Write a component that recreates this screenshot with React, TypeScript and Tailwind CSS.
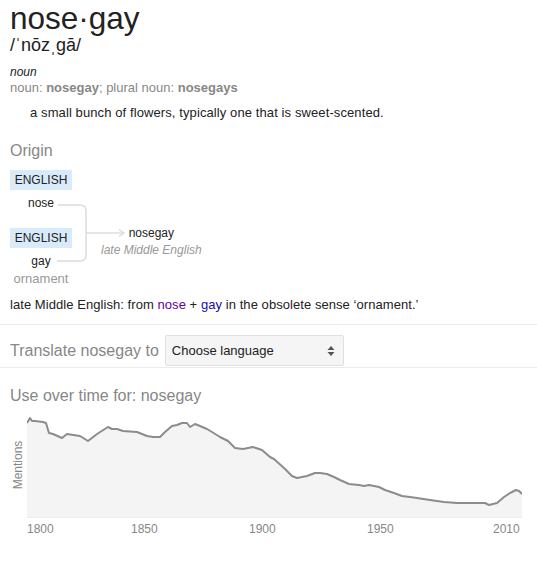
import React from "react";

const pts: [number, number][] = [
  [0, 11], [3, 6], [5, 9], [8, 9], [16, 10], [19, 11], [22, 21], [26, 22], [35, 26], [40, 22], [53, 24], [61, 29], [70, 22], [81, 15], [85, 17], [90, 17], [96, 19], [110, 20], [120, 24], [126, 25], [133, 25], [138, 20], [145, 14], [150, 13], [155, 11], [160, 11], [163, 15], [168, 12], [173, 14], [180, 17], [185, 20], [193, 25], [201, 29], [208, 36], [216, 37], [226, 35], [235, 38], [243, 45], [247, 47], [257, 56], [265, 64], [270, 66], [280, 64], [288, 61], [293, 61], [300, 62], [307, 65], [313, 68], [322, 72], [332, 73], [337, 74], [342, 73], [352, 75], [358, 78], [367, 81], [375, 84], [383, 85], [390, 86], [403, 88], [417, 90], [430, 91], [443, 91], [458, 91], [462, 93], [470, 91], [477, 85], [483, 81], [489, 78], [492, 79], [495, 82],
];

const line = pts.map((p, i) => `${i === 0 ? "M" : "L"}${p[0]} ${p[1]}`).join(" ");
const area = `${line} L495 106 L0 106 Z`;

const labels: [string, number][] = [
  ["1800", 27],
  ["1850", 131],
  ["1900", 249],
  ["1950", 367],
  ["2010", 493],
];

function Badge() {
  return (
    <div className="h-[20px] w-[62px] bg-[#d9ebfb] text-[12px] leading-[20px] text-[#222] flex items-center justify-center">
      ENGLISH
    </div>
  );
}

export default function App() {
  return (
    <div
      className="w-[537px] h-[561px] bg-white overflow-hidden"
      style={{ fontFamily: '"Liberation Sans", Arial, sans-serif' }}
    >
      <div className="px-[10px]">
        <h1 className="text-[31.5px] leading-[36px] text-[#222]">nose·gay</h1>
        <div className="text-[18px] leading-[18px] text-[#222]">/ˈnōzˌgā/</div>
        <div className="mt-[11px] text-[12px] leading-[15px] italic text-[#222]">noun</div>
        <div className="text-[13px] leading-[16px] text-[#878787]">
          noun: <b>nosegay</b>; plural noun: <b>nosegays</b>
        </div>
        <div className="mt-[9px] pl-[20px] text-[13px] leading-[16px] tracking-[0.1px] text-[#222]">
          a small bunch of flowers, typically one that is sweet-scented.
        </div>
        <div className="mt-[20px] text-[16px] leading-[20px] text-[#878787]">Origin</div>

        <div className="relative mt-[9px] flex">
          <svg
            className="absolute left-[-10px] top-0"
            width="140"
            height="120"
            viewBox="0 0 140 120"
            fill="none"
          >
            <path
              d="M58 35 H80 Q86 35 86 41 V85 Q86 91 80 91 H57"
              stroke="#dcdcdc"
              strokeWidth="1.5"
            />
            <path d="M86 63 H124" stroke="#dcdcdc" strokeWidth="1.5" />
            <path d="M119 59.5 L124 63 L119 66.5" stroke="#dcdcdc" strokeWidth="1.5" />
          </svg>
          <div className="flex flex-col items-center w-[62px]">
            <Badge />
            <div className="mt-[6px] text-[12px] leading-[14px] text-[#222]">nose</div>
            <div className="mt-[18px]">
              <Badge />
            </div>
            <div className="mt-[6px] text-[12px] leading-[14px] text-[#222]">gay</div>
            <div className="mt-[3px] text-[13px] leading-[15px] text-[#999]">ornament</div>
          </div>
          <div className="ml-[29px] mt-[56px] flex flex-col items-center">
            <div className="text-[12px] leading-[14px] text-[#222]">nosegay</div>
            <div className="mt-[3px] text-[12px] leading-[14px] italic text-[#999]">
              late Middle English
            </div>
          </div>
        </div>

        <div className="mt-[11px] text-[13px] leading-[16px] tracking-[0.06px] text-[#222]">
          late Middle English: from <span className="text-[#660099]">nose</span> +{" "}
          <span className="text-[#1a0dab]">gay</span> in the obsolete sense ‘ornament.’
        </div>
      </div>

      <div className="mt-[11px] border-t border-[#ebebeb]" />

      <div className="px-[10px] pt-[10px] pb-[1px] flex items-center gap-[6px]">
        <div className="text-[16px] leading-[20px] text-[#878787]">Translate nosegay to</div>
        <div className="h-[31px] w-[179px] rounded-[2px] border border-[#e0e0e0] bg-[#f5f5f5] flex items-center justify-between pl-[6px] pr-[8px]">
          <span className="text-[13px] leading-[16px] text-[#222]">Choose language</span>
          <svg width="8" height="12" viewBox="0 0 8 12">
            <path d="M4 1 L7.5 5 H0.5 Z" fill="#555" />
            <path d="M4 11 L7.5 7 H0.5 Z" fill="#555" />
          </svg>
        </div>
      </div>

      <div className="border-t border-[#ebebeb]" />

      <div className="px-[10px] mt-[18px] text-[16px] leading-[20px] text-[#878787]">
        Use over time for: nosegay
      </div>

      <div className="mt-[6px] flex">
        <div className="w-[27px] pl-[9px] flex items-center justify-center">
          <div className="-rotate-90 whitespace-nowrap text-[12px] leading-[14px] text-[#878787]">
            Mentions
          </div>
        </div>
        <svg width="495" height="106" viewBox="0 0 495 106" className="block">
          <path d={area} fill="#f4f4f4" />
          <path d="M0 105.5 H495" stroke="#ececec" strokeWidth="1" />
          <path d={line} fill="none" stroke="#8c8c8c" strokeWidth="2" strokeLinejoin="round" />
        </svg>
      </div>
      <div className="relative mt-[4px] h-[14px]">
        {labels.map(([t, x]) => (
          <span
            key={t}
            className="absolute top-0 text-[12px] leading-[14px] text-[#878787]"
            style={{ left: x }}
          >
            {t}
          </span>
        ))}
      </div>
    </div>
  );
}
